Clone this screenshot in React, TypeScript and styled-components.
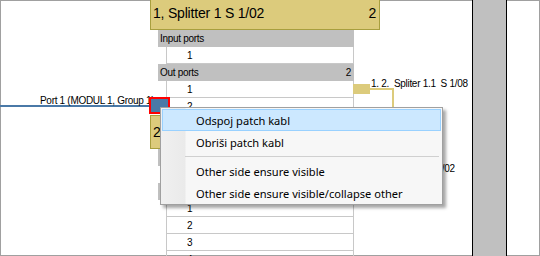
import React from "react";
import styled, { createGlobalStyle } from "styled-components";

const Global = createGlobalStyle`
  html, body { margin: 0; padding: 0; background: #fff; }
  body { font-family: "Liberation Sans", Arial, sans-serif; }
`;

const Canvas = styled.div`
  position: relative;
  width: 540px;
  height: 256px;
  overflow: hidden;
  background: #fff;
  outline: 1px solid #a0a0a0;
  outline-offset: -1px;
  font-family: "Liberation Sans", Arial, sans-serif;
  color: #000;
`;

const Lane = styled.div`
  position: absolute;
  top: 0;
  bottom: 0;
  left: 472px;
  width: 35px;
  box-sizing: border-box;
  background: #c0c0c0;
  border-left: 1px solid #000;
  border-right: 1px solid #000;
`;

const Wires = styled.svg`
  position: absolute;
  left: 0;
  top: 0;
`;

const Node = styled.div<{ $top: number }>`
  position: absolute;
  left: 150px;
  top: ${(p) => p.$top}px;
  width: 230px;
  display: flex;
  flex-direction: column;
`;

const NodeHeader = styled.div`
  box-sizing: border-box;
  height: 34px;
  background: #dccb7c;
  border: 1px solid #a89f3e;
  display: flex;
  align-items: center;
  justify-content: space-between;
  padding: 0 3px 0 2px;
  font-size: 14px;
  letter-spacing: -0.2px;
`;

const NodeBody = styled.div`
  width: 204px;
  display: flex;
  flex-direction: column;
`;

const SectionHead = styled.div`
  margin-left: 8px;
  height: 17px;
  background: #c0c0c0;
  display: flex;
  align-items: center;
  justify-content: space-between;
  padding: 0 3px 0 2px;
  font-size: 10px;
  letter-spacing: -0.3px;
`;

const PortRow = styled.div`
  position: relative;
  margin-left: 16px;
  height: 17px;
  box-sizing: border-box;
  border: 1px solid #c8c8c8;
  border-top: none;
  padding-left: 20px;
  display: flex;
  align-items: center;
  font-size: 10px;
`;

const PortStub = styled.div`
  position: absolute;
  left: 100%;
  top: 3px;
  width: 17px;
  height: 10px;
  background: #dccb7c;
`;

const WireLabel = styled.div<{ $x: number; $y: number }>`
  position: absolute;
  left: ${(p) => p.$x}px;
  top: ${(p) => p.$y}px;
  font-size: 10px;
  line-height: 12px;
  white-space: pre;
  letter-spacing: -0.3px;
`;

const SelectedPort = styled.div`
  position: absolute;
  left: 149px;
  top: 97px;
  width: 21px;
  height: 17px;
  box-sizing: border-box;
  border: 2px solid #ff0000;
  background: #4a79a7;
`;

const Menu = styled.div`
  position: absolute;
  left: 160px;
  top: 107px;
  width: 283px;
  box-sizing: border-box;
  border: 1px solid #a0a0a0;
  padding: 1px 1px 0;
  background: linear-gradient(to right, #f0f0f0 0, #eaeaea 24px, #f7f7f7 25px, #f7f7f7 100%);
  box-shadow: 3px 3px 3px rgba(0, 0, 0, 0.35);
  display: flex;
  flex-direction: column;
  font-family: "Noto Sans", "Open Sans", sans-serif;
  font-size: 11.1px;
  color: #000;
`;

const MenuItem = styled.div<{ $active?: boolean }>`
  height: 22px;
  box-sizing: border-box;
  display: flex;
  align-items: center;
  padding-left: 33px;
  border: 1px solid ${(p) => (p.$active ? "#99d1ff" : "transparent")};
  background: ${(p) => (p.$active ? "#cce8ff" : "transparent")};
  white-space: nowrap;
`;

const MenuSeparator = styled.div`
  height: 1px;
  margin: 3px 2px 3px 23px;
  background: #d0d0d0;
`;

const node1Rows = {
  input: ["1"],
  out: ["1", "2"],
};

export default function App() {
  return (
    <>
      <Global />
      <Canvas>
        <Lane />
        <Wires width={540} height={256}>
          <rect x={0} y={105} width={149} height={2} fill="#4a79a7" />
          <rect x={370} y={88} width={24} height={2} fill="#dccb7c" />
          <rect x={392} y={88} width={2} height={84} fill="#dccb7c" />
        </Wires>

        <Node $top={-4}>
          <NodeHeader>
            <span>1, Splitter 1 S 1/02</span>
            <span>2</span>
          </NodeHeader>
          <NodeBody>
            <SectionHead>
              <span>Input ports</span>
            </SectionHead>
            {node1Rows.input.map((r) => (
              <PortRow key={"i" + r}>{r}</PortRow>
            ))}
            <SectionHead>
              <span>Out ports</span>
              <span>2</span>
            </SectionHead>
            {node1Rows.out.map((r, i) => (
              <PortRow key={"o" + r}>
                {r}
                {i === 0 && <PortStub />}
              </PortRow>
            ))}
          </NodeBody>
        </Node>

        <Node $top={115}>
          <NodeHeader>
            <span>2, Splitter 1.1 S 1/08</span>
            <span>8</span>
          </NodeHeader>
          <NodeBody>
            <SectionHead>
              <span>Input ports</span>
            </SectionHead>
            <PortRow>1</PortRow>
            <SectionHead>
              <span>Out ports</span>
              <span>8</span>
            </SectionHead>
            {["1", "2", "3", "4"].map((r) => (
              <PortRow key={r}>{r}</PortRow>
            ))}
          </NodeBody>
        </Node>

        <WireLabel $x={40} $y={95}>Port 1 (MODUL 1, Group 1)</WireLabel>
        <WireLabel $x={371} $y={78}>1. 2.  Spliter 1.1  S 1/08</WireLabel>
        <WireLabel $x={358} $y={163}>1. 2.  Spliter 1.2  S 1/02</WireLabel>

        <SelectedPort />

        <Menu>
          <MenuItem $active>Odspoj patch kabl</MenuItem>
          <MenuItem>Obriši patch kabl</MenuItem>
          <MenuSeparator />
          <MenuItem>Other side ensure visible</MenuItem>
          <MenuItem>Other side ensure visible/collapse other</MenuItem>
        </Menu>
      </Canvas>
    </>
  );
}
